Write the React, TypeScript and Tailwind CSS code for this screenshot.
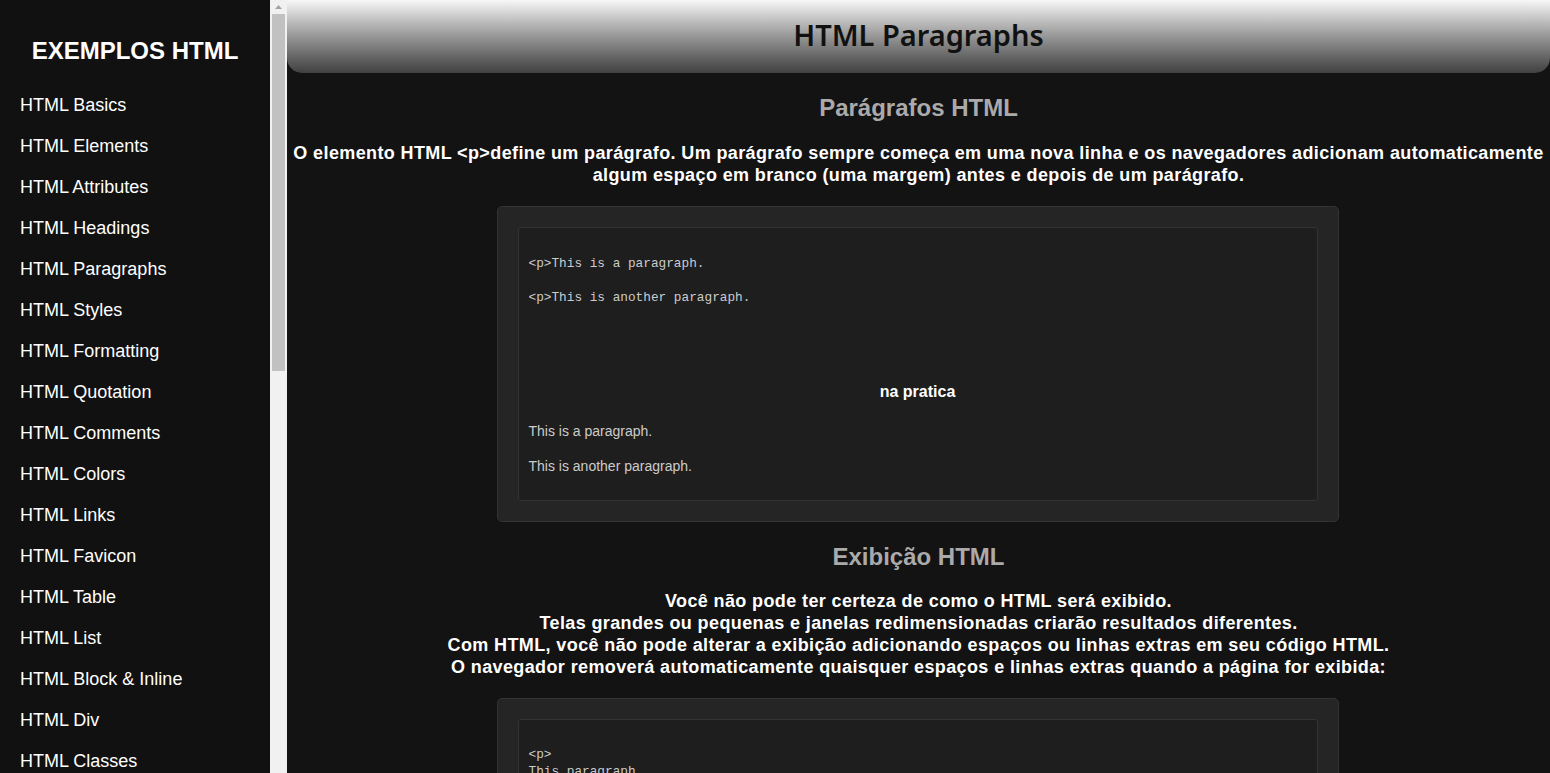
import React from 'react';

const navItems = [
  'HTML Basics',
  'HTML Elements',
  'HTML Attributes',
  'HTML Headings',
  'HTML Paragraphs',
  'HTML Styles',
  'HTML Formatting',
  'HTML Quotation',
  'HTML Comments',
  'HTML Colors',
  'HTML Links',
  'HTML Favicon',
  'HTML Table',
  'HTML List',
  'HTML Block & Inline',
  'HTML Div',
  'HTML Classes',
  'HTML Id',
];

const sans = { fontFamily: '"Liberation Sans", Arial, sans-serif' };
const mono = { fontFamily: '"Liberation Mono", "DejaVu Sans Mono", monospace' };

/* Fake browser scrollbar for the sidebar */
function SideScrollbar() {
  return (
    <div className="flex w-[17px] shrink-0 flex-col items-center bg-[#f1f1f1]">
      <div className="flex h-[14px] w-full items-center justify-center">
        <svg width="9" height="6" viewBox="0 0 9 6">
          <path d="M4.5 1 L8 5 L1 5 Z" fill="#a3a3a3" />
        </svg>
      </div>
      <div className="h-[357px] w-[13px] bg-[#c1c1c1]" />
    </div>
  );
}

function CodeBox({ children }: { children: React.ReactNode }) {
  return (
    <div className="mx-auto w-[842px] -translate-x-px rounded-[5px] border border-[#333] bg-[#252525] p-5">
      <div className="rounded-[3px] border border-[#333] bg-[#1e1e1e] px-[10px]">{children}</div>
    </div>
  );
}

export default function App() {
  return (
    <div className="flex h-[773px] overflow-hidden bg-[#131313]" style={sans}>
      {/* ── Sidebar ─────────────────────────────── */}
      <aside className="flex h-full w-[270px] shrink-0 flex-col overflow-hidden bg-[#111]">
        <h1 className="mt-[37px] text-center text-[24px] font-bold leading-[28px] text-white">
          EXEMPLOS HTML
        </h1>
        <ul className="mt-[30px] flex flex-col gap-[20px] pl-5">
          {navItems.map((item) => (
            <li key={item} className="text-[18px] leading-[21px] text-white">
              {item}
            </li>
          ))}
        </ul>
      </aside>
      <SideScrollbar />

      {/* ── Main ────────────────────────────────── */}
      <main className="flex min-w-0 flex-1 flex-col overflow-hidden">
        <header className="flex h-[73px] shrink-0 items-center justify-center rounded-b-[15px] bg-gradient-to-b from-[#f7f7f7] to-[#414141] pb-[4px]">
          <h1
            className="text-[29px] font-semibold leading-none text-[#111]"
            style={{ fontFamily: '"Noto Sans", "DejaVu Sans", sans-serif' }}
          >
            HTML Paragraphs
          </h1>
        </header>

        <section className="flex flex-col">
          <h2 className="pt-[21px] text-center text-[24px] font-bold leading-[28px] text-[#aaa]">
            Parágrafos HTML
          </h2>
          <p className="mt-[20px] text-center text-[18px] font-bold leading-[22px] tracking-[0.38px] text-white">
            O elemento HTML &lt;p&gt;define um parágrafo. Um parágrafo sempre começa em uma nova linha e os navegadores
            adicionam automaticamente algum espaço em branco (uma margem) antes e depois de um parágrafo.
          </p>

          <div className="mt-[20px]">
            <CodeBox>
              <div className="pt-[27px] text-[12.75px] leading-[17px] text-[#ccc]" style={mono}>
                <p>&lt;p&gt;This is a paragraph.</p>
                <p className="mt-[17px]">&lt;p&gt;This is another paragraph.</p>
              </div>
              <h3 className="mt-[77px] text-center text-[16px] font-bold leading-[18px] text-white">na pratica</h3>
              <p className="mt-[22px] text-[14px] leading-[16px] text-[#ccc]">This is a paragraph.</p>
              <p className="mt-[19px] pb-[26px] text-[14px] leading-[16px] text-[#ccc]">This is another paragraph.</p>
            </CodeBox>
          </div>

          <h2 className="mt-[21px] text-center text-[24px] font-bold leading-[28px] text-[#aaa]">Exibição HTML</h2>
          <p className="mt-[19px] text-center text-[18px] font-bold leading-[22px] tracking-[0.38px] text-white">
            Você não pode ter certeza de como o HTML será exibido.
            <br />
            Telas grandes ou pequenas e janelas redimensionadas criarão resultados diferentes.
            <br />
            Com HTML, você não pode alterar a exibição adicionando espaços ou linhas extras em seu código HTML.
            <br />O navegador removerá automaticamente quaisquer espaços e linhas extras quando a página for exibida:
          </p>

          <div className="mt-[20px]">
            <CodeBox>
              <div className="pt-[26px] text-[12.75px] leading-[17px] text-[#ccc]" style={mono}>
                <p>&lt;p&gt;</p>
                <p>This paragraph</p>
                <p>contains a lot of lines</p>
                <p>in the source code,</p>
              </div>
            </CodeBox>
          </div>
        </section>
      </main>
    </div>
  );
}
